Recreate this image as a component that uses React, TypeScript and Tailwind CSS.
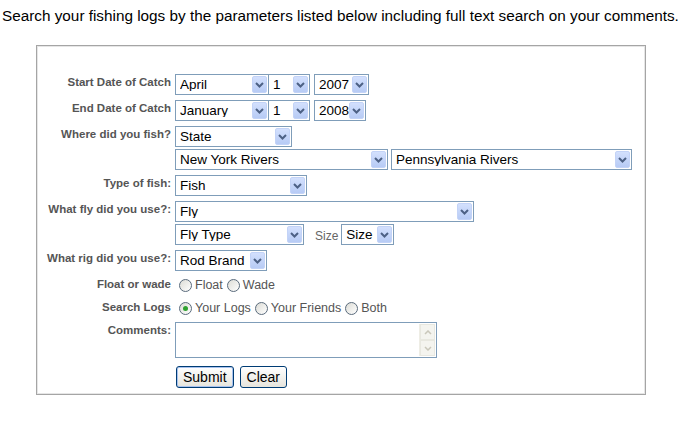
import React from 'react';

const Arrow = () => (
  <span className="flex h-[17px] w-[15px] shrink-0 items-center justify-center rounded-[2px] border border-[#c3d3f7] bg-linear-to-b from-[#d3e0fd] to-[#b7cbf5]">
    <svg width="9" height="6" viewBox="0 0 9 6">
      <path d="M1 1 L4.5 4.5 L8 1" stroke="#4d6185" strokeWidth="2" fill="none" />
    </svg>
  </span>
);

const Select = ({ value, className }: { value: string; className: string }) => (
  <div className={`flex h-[21px] items-center border border-[#7f9db9] bg-white pl-[4px] pr-px ${className}`}>
    <span className="flex-1 overflow-hidden whitespace-nowrap text-[13.5px] leading-none text-black">{value}</span>
    <Arrow />
  </div>
);

const Radio = ({ checked = false }: { checked?: boolean }) => (
  <span className="flex h-[13px] w-[13px] shrink-0 items-center justify-center rounded-full border border-[#5a6b7c] bg-linear-to-br from-[#dcdcd6] to-white">
    {checked && <span className="h-[5px] w-[5px] rounded-full bg-[#2fa12f]" />}
  </span>
);

const Label = ({ children }: { children: React.ReactNode }) => (
  <div className="pt-px text-right text-[11.5px] font-bold leading-[14px] text-[#555]">{children}</div>
);

const Option = ({ label, checked }: { label: string; checked?: boolean }) => (
  <label className="flex items-center gap-[3px]">
    <Radio checked={checked} />
    <span className="text-[12.5px] text-[#555]">{label}</span>
  </label>
);

const App = () => {
  return (
    <div className="min-h-screen bg-white font-['Liberation_Sans',Arial,sans-serif]">
      <p className="pl-[2px] pt-[7px] text-[15.3px] leading-[18px] text-black whitespace-nowrap">
        Search your fishing logs by the parameters listed below including full text search on your comments.
      </p>

      <div className="ml-[36px] mt-[20px] w-[610px] border border-[#a5a5a5]">
        <div className="border border-[#e6e6e6] pb-[5px] pt-[27px]">
          <div className="grid grid-cols-[133px_1fr] gap-x-[4px] gap-y-[5px]">
            <Label>Start Date of Catch</Label>
            <div className="flex">
              <Select value="April" className="w-[94px]" />
              <Select value="1" className="w-[41px] border-l-0" />
              <Select value="2007" className="ml-[4px] w-[55px]" />
            </div>

            <Label>End Date of Catch</Label>
            <div className="flex">
              <Select value="January" className="w-[94px]" />
              <Select value="1" className="w-[41px] border-l-0" />
              <Select value="2008" className="ml-[4px] w-[52px]" />
            </div>

            <Label>Where did you fish?</Label>
            <div className="flex flex-col gap-[2px]">
              <Select value="State" className="w-[117px]" />
              <div className="flex gap-[3px]">
                <Select value="New York Rivers" className="w-[213px]" />
                <Select value="Pennsylvania Rivers" className="w-[241px]" />
              </div>
            </div>

            <Label>Type of fish:</Label>
            <Select value="Fish" className="w-[132px]" />

            <Label>What fly did you use?:</Label>
            <div className="flex flex-col gap-[2px]">
              <Select value="Fly" className="w-[299px]" />
              <div className="flex items-center">
                <Select value="Fly Type" className="w-[129px]" />
                <span className="ml-[11px] mr-[3px] mt-[3px] text-[12px] text-[#666]">Size</span>
                <Select value="Size" className="w-[53px]" />
              </div>
            </div>

            <Label>What rig did you use?:</Label>
            <Select value="Rod Brand" className="w-[92px]" />

            <Label>Float or wade</Label>
            <div className="flex h-[18px] items-center gap-[4px] pl-[4px]">
              <Option label="Float" />
              <Option label="Wade" />
            </div>

            <Label>Search Logs</Label>
            <div className="flex h-[18px] items-center gap-[4px] pl-[4px]">
              <Option label="Your Logs" checked />
              <Option label="Your Friends" />
              <Option label="Both" />
            </div>

            <Label>Comments:</Label>
            <div className="flex h-[36px] w-[262px] border border-[#7f9db9] bg-white">
              <div className="flex-1" />
              <div className="m-px flex w-[16px] flex-col border-l border-[#eeede5] bg-[#fafaf7]">
                <div className="flex h-[16px] items-center justify-center border border-[#e8e8e0] bg-[#f4f4ef]">
                  <svg width="8" height="5" viewBox="0 0 8 5">
                    <path d="M1 4 L4 1 L7 4" stroke="#c9c7ba" strokeWidth="1.5" fill="none" />
                  </svg>
                </div>
                <div className="flex-1" />
                <div className="flex h-[16px] items-center justify-center border border-[#e8e8e0] bg-[#f4f4ef]">
                  <svg width="8" height="5" viewBox="0 0 8 5">
                    <path d="M1 1 L4 4 L7 1" stroke="#c9c7ba" strokeWidth="1.5" fill="none" />
                  </svg>
                </div>
              </div>
            </div>

            <div />
            <div className="mt-[3px] flex gap-[6px] pl-px">
              <button className="h-[22px] rounded-[3px] border border-[#003c74] bg-linear-to-b from-white to-[#e6e4dc] px-[2px] shadow-[inset_0_0_0_1px_#a8c2ee] text-[14px] leading-none text-black">
                <span className="px-[4px]">Submit</span>
              </button>
              <button className="h-[22px] rounded-[3px] border border-[#003c74] bg-linear-to-b from-white to-[#e6e4dc] px-[6px] text-[14px] leading-none text-black">
                Clear
              </button>
            </div>
          </div>
        </div>
      </div>
    </div>
  );
};

export default App;
